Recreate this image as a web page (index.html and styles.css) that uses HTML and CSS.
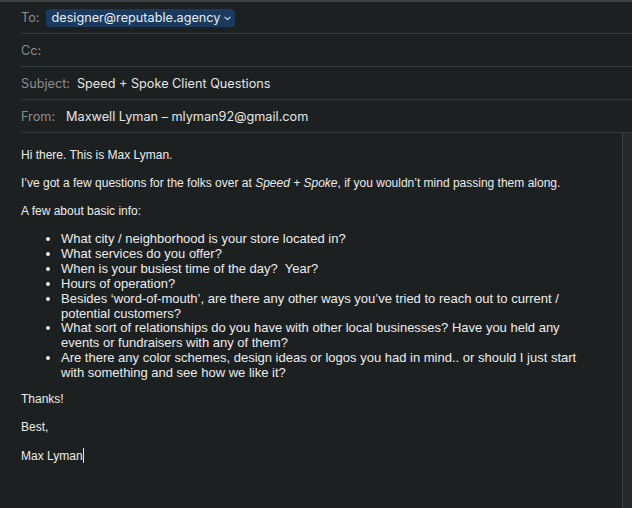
FILE: index.html
```html
<!DOCTYPE html>
<html>
<head>
<meta charset="utf-8">
<link rel="stylesheet" href="styles.css">
</head>
<body>
<div class="window">
  <div class="headers">
    <div class="row">
      <span class="label">To:</span>
      <span class="token">designer@reputable.agency<svg class="chev" width="7" height="5" viewBox="0 0 7 5"><path d="M1 1.2 L3.5 3.6 L6 1.2" fill="none" stroke="#c9d6e6" stroke-width="1.2" stroke-linecap="round" stroke-linejoin="round"/></svg></span>
    </div>
    <div class="row">
      <span class="label">Cc:</span>
    </div>
    <div class="row">
      <span class="label">Subject:</span>
      <span class="value">Speed + Spoke Client Questions</span>
    </div>
    <div class="row">
      <span class="label">From:</span>
      <span class="value from">Maxwell Lyman – mlyman92@gmail.com</span>
    </div>
  </div>
  <div class="body">
    <div class="content">
      <p>Hi there. This is Max Lyman.</p>
      <p>I’ve got a few questions for the folks over at <em>Speed + Spoke</em>, if you wouldn’t mind passing them along.</p>
      <p>A few about basic info:</p>
      <ul>
        <li>What city / neighborhood is your store located in?</li>
        <li>What services do you offer?</li>
        <li>When is your busiest time of the day?&nbsp; Year?</li>
        <li>Hours of operation?</li>
        <li>Besides ‘word-of-mouth’, are there any other ways you’ve tried to reach out to current / potential customers?</li>
        <li>What sort of relationships do you have with other local businesses? Have you held any events or fundraisers with any of them?</li>
        <li>Are there any color schemes, design ideas or logos you had in mind.. or should I just start with something and see how we like it?</li>
      </ul>
      <p class="thanks">Thanks!</p>
      <p>Best,</p>
      <p>Max Lyman<span class="caret"></span></p>
    </div>
    <div class="track"></div>
  </div>
</div>
</body>
</html>
```

FILE: styles.css
```css
html, body {
  margin: 0;
  padding: 0;
  background: #1c2021;
}
.window {
  width: 632px;
  height: 508px;
  display: flex;
  flex-direction: column;
  background: #1c2021;
  border-top: 2px solid #3e4142;
  box-sizing: border-box;
  overflow: hidden;
}
.headers {
  font-family: Inter, "Noto Sans", sans-serif;
  font-size: 12.7px;
}
.row {
  margin-left: 21px;
  height: 33px;
  box-sizing: border-box;
  border-bottom: 1px solid #35393a;
  display: flex;
  align-items: center;
  gap: 7px;
}
.row:first-child {
  height: 32px;
}
.label {
  color: #8b8d8e;
}
.value {
  color: #e4e5e5;
}
.from {
  margin-left: 4px;
}
.token {
  background: #1b3a5e;
  color: #e6edf5;
  border-radius: 4px;
  padding: 0 4px 0 5px;
  height: 18px;
  display: inline-flex;
  align-items: center;
  gap: 3px;
}
.chev {
  display: block;
  margin-top: 1px;
}
.body {
  flex: 1;
  display: flex;
  min-height: 0;
}
.content {
  flex: 1;
  padding: 15px 21px 0 21px;
  font-family: "Liberation Sans", Arial, sans-serif;
  font-size: 12px;
  line-height: 15px;
  color: #ececec;
}
.content p {
  margin: 0 0 13px 0;
}
.content ul {
  margin: 0 0 11px 0;
  padding-left: 40px;
  font-size: 13px;
  line-height: 14.9px;
}
.content li {
  padding-left: 0;
}
.caret {
  display: inline-block;
  width: 1px;
  height: 15px;
  background: #e0e0e0;
  vertical-align: -3px;
}
.track {
  width: 9px;
  background: #25292a;
  border-left: 1px solid #3a3e3f;
}
```
